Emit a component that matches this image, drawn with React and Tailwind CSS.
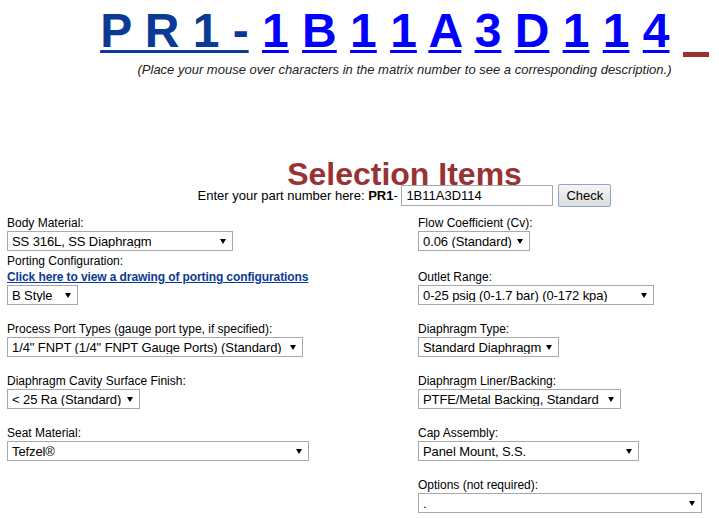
import React from 'react';

const matrix = ['1', 'B', '1', '1', 'A', '3', 'D', '1', '1', '4'];

const Select = ({ w, value }) => (
  <div className={`flex h-[20px] items-center justify-between gap-[3px] border border-[#a9a9a9] bg-white pl-[4px] pr-[6px] text-[13px] leading-none text-black ${w}`}>
    <span className="truncate tracking-[-0.1px]">{value}</span>
    <svg width="6" height="5" viewBox="0 0 6 5" className="shrink-0">
      <path d="M0 0h6L3 5z" fill="#000" />
    </svg>
  </div>
);

const Field = ({ label, w, value, children }) => (
  <div className="flex flex-col items-start">
    <div className="text-[12px] leading-[16px] text-black">{label}</div>
    {children}
    <Select w={w} value={value} />
  </div>
);

const Row = ({ left, right, className = '' }) => (
  <div className={`flex items-end ${className}`}>
    <div className="w-[411px] shrink-0">{left}</div>
    <div className="flex-1">{right}</div>
  </div>
);

const App = () => {
  return (
    <div className="min-h-[518px] bg-white font-['Liberation_Sans',Arial,sans-serif] text-black">
      {/* matrix number header */}
      <div className="pl-[90px] text-center">
        <div className="whitespace-nowrap text-[48px] font-bold leading-[62px]">
          <a href="#" className="text-[#0b3a96] underline decoration-[3px] underline-offset-[3px]">P R 1 -</a>{' '}
          {matrix.map((c, i) => (
            <React.Fragment key={i}>
              <a href="#" className="text-[#0000ff] underline decoration-[3px] underline-offset-[3px]">{c}</a>{' '}
            </React.Fragment>
          ))}
          <span className="inline-block h-[5px] w-[26px] bg-[#993333] align-[-10px]" />
        </div>
        <p className="text-[13px] italic leading-[16px] text-[#222]">
          (Place your mouse over characters in the matrix number to see a corresponding description.)
        </p>

        <h2 className="mt-[86px] text-[32px] font-bold leading-[21px] text-[#993333]">Selection Items</h2>

        <div className="-mt-[1px] flex items-center justify-center text-[13px]">
          <span>Enter your part number here:&nbsp;</span>
          <b>PR1</b>
          <span>-&nbsp;</span>
          <input
            defaultValue="1B11A3D114"
            className="h-[21px] w-[152px] border border-[#a9a9a9] px-[4px] text-[13px] outline-none"
          />
          <button className="ml-[5px] h-[23px] w-[53px] rounded-[2px] border border-[#8ea6c6] bg-gradient-to-b from-[#f6f6f6] to-[#dcdcdc] text-[13px]">
            Check
          </button>
        </div>
      </div>

      {/* selection form */}
      <div className="mt-[8px] pl-[7px]">
        <Row
          left={<Field label="Body Material:" w="w-[226px]" value="SS 316L, SS Diaphragm" />}
          right={<Field label="Flow Coefficient (Cv):" w="w-[112px]" value="0.06 (Standard)" />}
        />
        <Row
          className="mt-[2px]"
          left={
            <Field label="Porting Configuration:" w="w-[71px]" value="B Style">
              <a href="#" className="text-[12px] font-bold leading-[16px] tracking-[-0.1px] text-[#0b3a96] underline">
                Click here to view a drawing of porting configurations
              </a>
            </Field>
          }
          right={<Field label="Outlet Range:" w="w-[236px]" value="0-25 psig (0-1.7 bar) (0-172 kpa)" />}
        />
        <Row
          className="mt-[16px]"
          left={<Field label="Process Port Types (gauge port type, if specified):" w="w-[296px]" value={'1/4" FNPT (1/4" FNPT Gauge Ports) (Standard)'} />}
          right={<Field label="Diaphragm Type:" w="w-[141px]" value="Standard Diaphragm" />}
        />
        <Row
          className="mt-[16px]"
          left={<Field label="Diaphragm Cavity Surface Finish:" w="w-[133px]" value="< 25 Ra (Standard)" />}
          right={<Field label="Diaphragm Liner/Backing:" w="w-[203px]" value="PTFE/Metal Backing, Standard" />}
        />
        <Row
          className="mt-[16px]"
          left={<Field label="Seat Material:" w="w-[302px]" value="Tefzel®" />}
          right={<Field label="Cap Assembly:" w="w-[221px]" value="Panel Mount, S.S." />}
        />
        <Row
          className="mt-[16px]"
          left={<div />}
          right={<Field label="Options (not required):" w="w-[284px]" value="." />}
        />
      </div>
    </div>
  );
};

export default App;
